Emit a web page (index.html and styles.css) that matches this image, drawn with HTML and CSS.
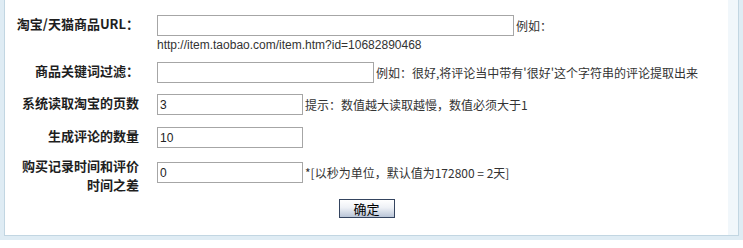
FILE: index.html
```html
<!DOCTYPE html>
<html lang="zh-CN">
<head>
<meta charset="utf-8">
<title>评论提取设置</title>
<link rel="stylesheet" href="styles.css">
</head>
<body>
<div class="frame">
  <div class="box">
    <form class="main">
      <div class="row row-url">
        <label class="label">淘宝/天猫商品URL：</label>
        <div class="field"><input class="inp inp-wide" type="text"><span class="note">例如：</span></div>
      </div>
      <div class="row row-sample">
        <span></span>
        <div class="sample">http://item.taobao.com/item.htm?id=10682890468</div>
      </div>
      <div class="row row-kw">
        <label class="label">商品关键词过滤：</label>
        <div class="field"><input class="inp inp-mid" type="text"><span class="note">例如：很好,将评论当中带有'很好'这个字符串的评论提取出来</span></div>
      </div>
      <div class="row row-pages">
        <label class="label">系统读取淘宝的页数</label>
        <div class="field"><input class="inp inp-short" type="text" value="3"><span class="note">提示：数值越大读取越慢，数值必须大于1</span></div>
      </div>
      <div class="row row-count">
        <label class="label">生成评论的数量</label>
        <div class="field"><input class="inp inp-short" type="text" value="10"></div>
      </div>
      <div class="row row-diff">
        <label class="label label-two"><span class="line">购买记录时间和评价</span><span class="line">时间之差</span></label>
        <div class="field field-diff"><input class="inp inp-short" type="text" value="0"><span class="note">*[以秒为单位，默认值为172800 = 2天]</span></div>
      </div>
      <div class="actions"><button class="btn" type="button">确定</button></div>
    </form>
    <div class="side"></div>
  </div>
</div>
</body>
</html>
```

FILE: styles.css
```css
html, body {
  margin: 0;
  padding: 0;
  background: #ffffff;
}

.frame {
  width: 743px;
  height: 240px;
  box-sizing: border-box;
  padding: 0 4px 4px 4px;
  background: #dfecf4;
}

.box {
  display: flex;
  height: 236px;
  box-sizing: border-box;
  border: 1px solid #c2d6e2;
  border-top: none;
  background: #ffffff;
}

.main {
  flex: 1;
  margin: 0;
  padding-top: 15px;
  font-family: "Noto Sans CJK SC", "Liberation Sans", sans-serif;
  font-size: 12px;
  color: #333333;
}

.side {
  width: 10px;
  background: #f1f7fb;
}

.row {
  display: grid;
  grid-template-columns: 134px 1fr;
  column-gap: 18px;
  align-items: center;
}

.label {
  text-align: right;
  font-size: 13px;
  font-weight: bold;
  color: #1e1e1e;
  line-height: 16px;
  margin-top: -3px;
}

.field {
  display: flex;
  align-items: center;
  height: 21px;
}

.inp {
  box-sizing: border-box;
  height: 21px;
  margin: 0;
  padding: 0 2px;
  border: 1px solid #a6a6a6;
  font-family: "Liberation Sans", Arial, sans-serif;
  font-size: 12px;
  color: #222222;
  background: #ffffff;
  outline: none;
}

.inp-wide { width: 357px; }
.inp-mid { width: 217px; }
.inp-short { width: 146px; }

.note {
  margin-left: 2px;
  line-height: 16px;
  white-space: nowrap;
}

.row-sample { margin-top: 2px; }

.sample {
  font-family: "Liberation Sans", Arial, sans-serif;
  font-size: 12px;
  line-height: 15px;
  color: #333333;
}

.row-kw { margin-top: 9px; }
.row-pages { margin-top: 11px; }
.row-count { margin-top: 12px; }

.row-diff {
  margin-top: 11px;
  align-items: start;
}

.label-two {
  margin-top: -3px;
  display: flex;
  flex-direction: column;
  align-items: flex-end;
}

.line {
  display: block;
  line-height: 19px;
}

.field-diff { margin-top: 3px; }

.actions {
  margin-top: 5px;
  text-align: center;
}

.btn {
  box-sizing: border-box;
  width: 56px;
  height: 19px;
  margin: 0;
  padding: 0;
  border: 1px solid #34445f;
  background: linear-gradient(#ffffff 0%, #eef1f6 45%, #b9c5d7 100%);
  font-family: "Noto Sans CJK SC", sans-serif;
  font-size: 13px;
  line-height: 16px;
  color: #000000;
}
```
